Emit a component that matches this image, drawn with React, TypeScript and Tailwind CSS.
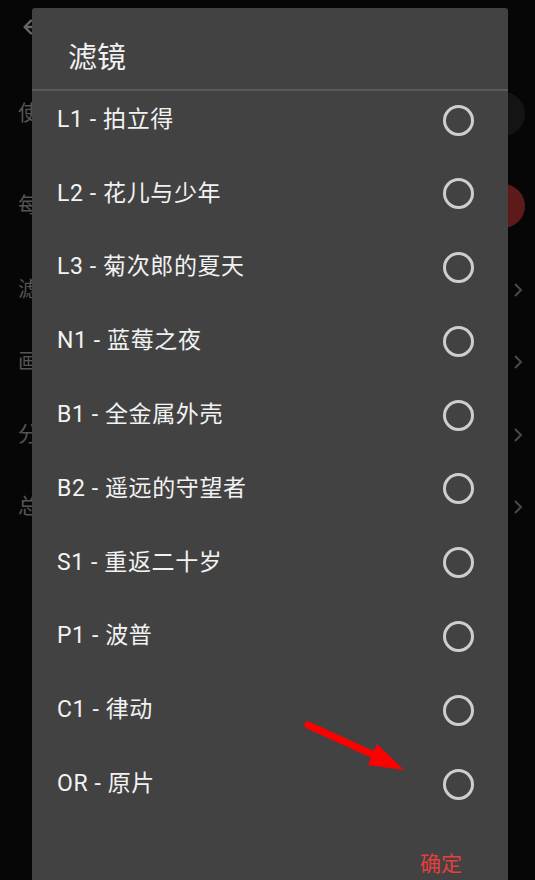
import React from "react";

const items = [
  "L1 - 拍立得",
  "L2 - 花儿与少年",
  "L3 - 菊次郎的夏天",
  "N1 - 蓝莓之夜",
  "B1 - 全金属外壳",
  "B2 - 遥远的守望者",
  "S1 - 重返二十岁",
  "P1 - 波普",
  "C1 - 律动",
  "OR - 原片",
];

const font = { fontFamily: 'Roboto, "Noto Sans CJK SC", sans-serif' };

function Chevron() {
  return (
    <svg width="10" height="16" viewBox="0 0 10 16" className="mr-[12px]">
      <path d="M2 2 L8 8 L2 14" fill="none" stroke="#4a4a4a" strokeWidth="2" />
    </svg>
  );
}

export default function App() {
  return (
    <div
      className="relative w-[535px] h-[880px] bg-[#060606] overflow-hidden"
      style={font}
    >
      {/* background page */}
      <div className="flex flex-col text-[#555] text-[21px]">
        <div className="h-[70px] flex items-start pt-[16px] pl-[20px]">
          <svg width="22" height="22" viewBox="0 0 24 24">
            <path d="M12 19 L5 12 L12 5 M5 12 H19" fill="none" stroke="#666" strokeWidth="2.5" strokeLinecap="round" strokeLinejoin="round" />
          </svg>
        </div>
        <div className="h-[88px] flex items-center justify-between pl-[18px] pr-[10px]">
          <span>使</span>
          <div className="w-[44px] h-[44px] rounded-full bg-[#141414]" />
        </div>
        <div className="h-[96px] flex items-center justify-between pl-[18px] pr-[10px]">
          <span>每</span>
          <div className="w-[44px] h-[44px] rounded-full bg-[#5c1a1a]" />
        </div>
        <div className="h-[72px] flex items-center justify-between pl-[18px]">
          <span>滤</span>
          <Chevron />
        </div>
        <div className="h-[72px] flex items-center justify-between pl-[18px]">
          <span>画</span>
          <Chevron />
        </div>
        <div className="h-[73px] flex items-center justify-between pl-[18px]">
          <span>分</span>
          <Chevron />
        </div>
        <div className="h-[72px] flex items-center justify-between pl-[18px]">
          <span>总</span>
          <Chevron />
        </div>
      </div>

      {/* dialog */}
      <div className="absolute left-[32px] top-[8px] w-[476px] bottom-0 bg-[#424242] rounded-t-[3px] flex flex-col">
        <div className="h-[81px] pt-[31px] pl-[36px]">
          <div className="text-[29px] leading-[38px] text-[#f2f2f2]">滤镜</div>
        </div>
        <div className="h-[2px] bg-[#5a5a5a]" />
        <div className="flex flex-col gap-[17.8px] pt-[1px]">
          {items.map((t) => (
            <div key={t} className="h-[56px] flex items-center justify-between pl-[25px] pr-[34px]">
              <span className="text-[23px] tracking-[0.6px] text-[#f2f2f2]">{t}</span>
              <div className="w-[31px] h-[31px] rounded-full border-[3px] border-[#cecece]" />
            </div>
          ))}
        </div>
        <div className="mt-[39px] h-[26px] flex justify-end pr-[46px]">
          <span className="text-[21px] leading-[26px] text-[#e53e3e]">确定</span>
        </div>
      </div>

      {/* red annotation arrow */}
      <svg className="absolute left-0 top-0" width="535" height="880" viewBox="0 0 535 880">
        <line x1="308" y1="725" x2="376" y2="756" stroke="#ff0000" strokeWidth="7" strokeLinecap="round" />
        <polygon points="377,744 368,765 404,770" fill="#ff0000" />
      </svg>
    </div>
  );
}
